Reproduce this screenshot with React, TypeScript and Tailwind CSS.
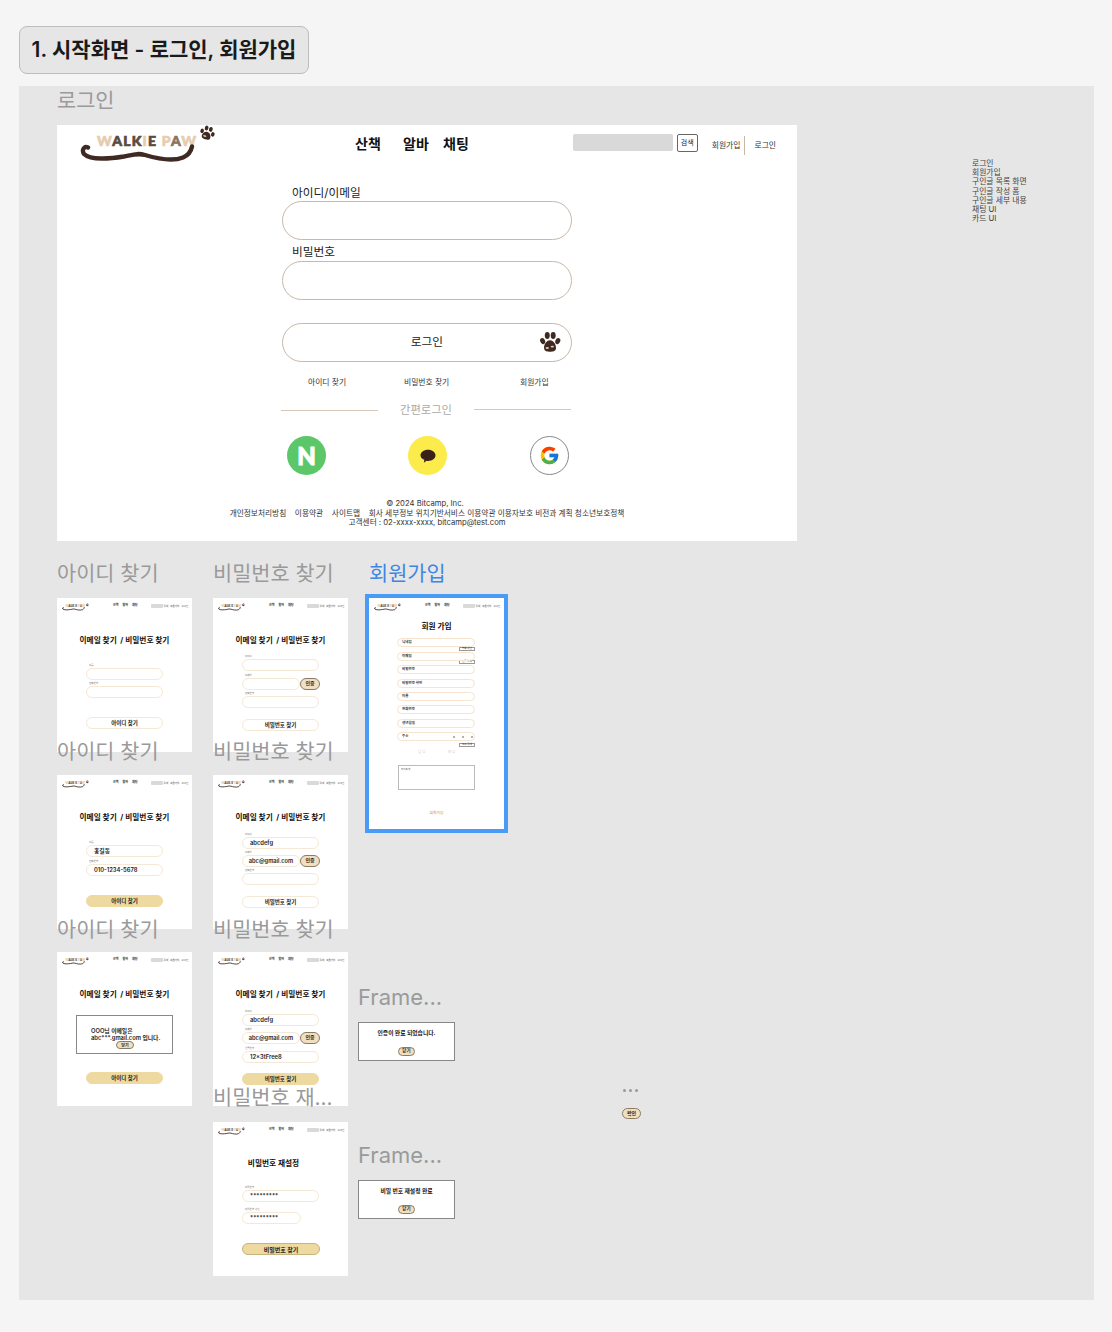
import { FcGoogle } from 'react-icons/fc';

function Paw({ className }: { className?: string }) {
  return (
    <svg viewBox="0 0 24 24" className={className} fill="#3e2a22">
      <ellipse cx="4" cy="11" rx="2.6" ry="3.4" transform="rotate(-25 4 11)" />
      <ellipse cx="9" cy="5" rx="2.7" ry="3.8" />
      <ellipse cx="15.5" cy="5" rx="2.7" ry="3.8" />
      <ellipse cx="20.5" cy="11" rx="2.6" ry="3.4" transform="rotate(25 20.5 11)" />
      <path d="M12 10c4 0 7 5 6.500 9-.4 3-3.500 3.500-6.500 3.500S6 22 5.600 19C5 15 8 10 12 10z" />
      <ellipse cx="9" cy="18.500" rx="1.800" ry="1" fill="#e6cdb0" />
      <ellipse cx="14.500" cy="17" rx="1.800" ry="1" fill="#e6cdb0" />
    </svg>
  );
}

function Logo({ className }: { className?: string }) {
  return (
    <svg viewBox="0 0 136 38" className={className}>
      <text
        x="17"
        y="21"
        fontFamily="Lato, sans-serif"
        fontWeight="900"
        fontSize="14"
        textLength="99"
        lengthAdjust="spacing"
        strokeWidth="0.7"
      >
        <tspan fill="#e6cdb0" stroke="#e6cdb0">W</tspan>
        <tspan fill="#5a4a40" stroke="#5a4a40">ALK</tspan>
        <tspan fill="#e6cdb0" stroke="#e6cdb0">I</tspan>
        <tspan fill="#5a4a40" stroke="#5a4a40">E </tspan>
        <tspan fill="#e6cdb0" stroke="#e6cdb0">P</tspan>
        <tspan fill="#8a7460" stroke="#8a7460">A</tspan>
        <tspan fill="#e6cdb0" stroke="#e6cdb0">W</tspan>
      </text>
      <path
        d="M8 22.500C4 20.500 1.500 25 4 29c6 6 25 5 40 2.500 10-2 14-3.500 21-1.500 10 3 27 7 38 2.500 6-2.500 8-6 9-11"
        fill="none"
        stroke="#3e2a22"
        strokeWidth="4.400"
        strokeLinecap="round"
      />
      <g transform="translate(119 0) rotate(18 8 8) scale(0.68)">
        <ellipse cx="4" cy="11" rx="2.600" ry="3.400" fill="#3e2a22" />
        <ellipse cx="9" cy="5" rx="2.700" ry="3.600" fill="#3e2a22" />
        <ellipse cx="15.500" cy="5" rx="2.700" ry="3.600" fill="#3e2a22" />
        <ellipse cx="20.500" cy="11" rx="2.600" ry="3.400" fill="#3e2a22" />
        <path d="M12 10c4 0 7 4 6.500 8-.4 3-3.500 3.500-6.500 3.500S6 21 5.600 18C5 14 8 10 12 10z" fill="#3e2a22" />
        <ellipse cx="10" cy="17" rx="2.500" ry="1.200" fill="#e6cdb0" />
      </g>
    </svg>
  );
}

function MiniHeader() {
  return (
    <div className="flex h-[16px] items-start">
      <Logo className="ml-[5px] mt-[5px] h-[8px] w-[27px]" />
      <div className="ml-[24px] mt-[5px] flex gap-[4px] text-[3px] font-bold leading-[4px] text-[#222]">
        <span>산책</span>
        <span>알바</span>
        <span>채팅</span>
      </div>
      <div className="ml-[13px] mt-[6px] h-[4px] w-[12px] rounded-[1px] bg-[#d9d9d9]" />
      <div className="ml-[1px] mt-[7px] flex gap-[2px] text-[2.500px] leading-[3px] text-[#444]">
        <span>검색</span>
        <span>회원가입</span>
        <span>로그인</span>
      </div>
    </div>
  );
}

function MiniField({ label, value, className }: { label: string; value?: string; className?: string }) {
  return (
    <div className={className}>
      <div className="h-[4px] pl-[3px] text-[2.500px] leading-[4px] text-[#777]">{label}</div>
      <div className="flex h-[12px] w-[77px] items-center rounded-[6px] border border-[#f6e8d6] pl-[7px] text-[5.800px] font-semibold text-[#222]">
        {value}
      </div>
    </div>
  );
}

function AuthField({ value, className }: { value?: string; className?: string }) {
  return (
    <div className={className}>
      <div className="h-[4px] pl-[3px] text-[2.500px] leading-[4px] text-[#777]">이메일</div>
      <div className="flex w-[78px] items-center">
        <div className="flex h-[12px] w-[58px] items-center justify-center rounded-[6px] border border-[#f6e8d6] text-[5.700px] font-semibold text-[#222]">
          {value}
        </div>
        <PillBtn className="h-[12px] w-[20px] text-[5px]">인증</PillBtn>
      </div>
    </div>
  );
}

function PillBtn({ children, className }: { children: string; className?: string }) {
  return (
    <div
      className={`flex items-center justify-center rounded-full border border-[#8c7b62] bg-[#f0dfc0] font-semibold text-[#222] ${className ?? ''}`}
    >
      {children}
    </div>
  );
}

function WideBtn({ children, filled, className }: { children: string; filled?: boolean; className?: string }) {
  return (
    <div
      className={`flex h-[12px] w-[77px] items-center justify-center rounded-[6px] border text-[5.500px] font-bold text-[#222] ${
        filled ? 'border-[#eed9a0] bg-[#eed9a0]' : 'border-[#f6e8d6] bg-white'
      } ${className ?? ''}`}
    >
      {children}
    </div>
  );
}

function Thumb({
  title = '이메일 찾기  / 비밀번호 찾기',
  titleClass = 'pt-px',
  className,
  children,
}: {
  title?: string;
  titleClass?: string;
  className?: string;
  children: React.ReactNode;
}) {
  return (
    <div className={`absolute flex h-[154px] w-[135px] flex-col bg-white ${className ?? ''}`}>
      <MiniHeader />
      <div className={`mt-[21px] h-[10px] whitespace-pre text-center text-[7.700px] font-bold leading-[10px] text-[#111] ${titleClass}`}>{title}</div>
      <div className="ml-[29px] flex flex-col">{children}</div>
    </div>
  );
}

function Modal({ text, className }: { text: string; className?: string }) {
  return (
    <div className={`absolute flex h-[39px] w-[97px] flex-col items-center border border-[#888] bg-white ${className ?? ''}`}>
      <div className="mt-[6px] text-[5.800px] font-bold leading-[7px] text-[#111]">{text}</div>
      <PillBtn className="mt-[11px] h-[9px] w-[17px] text-[4.500px]">닫기</PillBtn>
    </div>
  );
}

function Label({
  children,
  tone = 'text-[20.800px] text-[#9a9a9a]',
  className,
}: {
  children: string;
  tone?: string;
  className?: string;
}) {
  return <div className={`absolute pt-px leading-[28px] ${tone} ${className ?? ''}`}>{children}</div>;
}

function SignupRow({ label, className, children }: { label: string; className?: string; children?: React.ReactNode }) {
  return (
    <div className={`relative flex h-[9px] w-[78px] items-center rounded-[5px] border border-[#f6e4cf] pl-[4px] text-[3.500px] font-semibold text-[#333] ${className ?? ''}`}>
      {label}
      {children}
    </div>
  );
}

function SmallCheck({ children, className }: { children: string; className?: string }) {
  return (
    <div className={`ml-auto flex h-[4px] w-[16px] items-center justify-center border border-[#999] text-[2.500px] leading-none text-[#333] ${className ?? ''}`}>
      {children}
    </div>
  );
}

function MainFrame() {
  return (
    <div className="absolute left-[38px] top-[39px] flex h-[416px] w-[740px] flex-col bg-white">
      <div className="flex h-[60px] items-start">
        <Logo className="ml-[23px] h-[38px] w-[136px]" />
        <div className="ml-[139px] mt-[9px] flex text-[14px] font-bold leading-[19px] text-[#111]">
          <span className="w-[48px]">산책</span>
          <span className="w-[40px]">알바</span>
          <span>채팅</span>
        </div>
        <div className="ml-[104px] mt-[9px] h-[17px] w-[100px] rounded-[2px] bg-[#d9d9d9]" />
        <div className="ml-[4px] mt-[9px] flex h-[18px] w-[21px] items-center justify-center rounded-[2px] border border-[#666] text-[7px] text-[#222]">검색</div>
        <div className="ml-[14px] mt-[11px] flex h-[19px] items-center text-[7.800px] text-[#333]">
          <span>회원가입</span>
          <span className="mx-[4px] h-[19px] w-px bg-[#c8b8a8]" />
          <span className="ml-[5px]">로그인</span>
        </div>
      </div>
      <div className="ml-[225px] flex w-[290px] flex-col">
        <div className="pl-[10px] text-[11.700px] leading-[16px] text-[#222]">아이디/이메일</div>
        <div className="h-[39px] rounded-[20px] border border-[#c8b8a8]" />
        <div className="mt-[4px] pl-[10px] text-[11.700px] leading-[17px] text-[#222]">비밀번호</div>
        <div className="h-[39px] rounded-[20px] border border-[#c8b8a8]" />
        <div className="relative mt-[23px] flex h-[39px] items-center justify-center rounded-[20px] border border-[#c8b8a8] text-[11.700px] text-[#222]">
          로그인
          <Paw className="absolute right-[10px] top-[7px] h-[22px] w-[22px]" />
        </div>
        <div className="mt-[15px] flex text-[7.800px] leading-[11px] text-[#333]">
          <span className="ml-[26px] w-[96px]">아이디 찾기</span>
          <span className="w-[116px]">비밀번호 찾기</span>
          <span>회원가입</span>
        </div>
        <div className="mt-[15px] flex items-center text-[11.300px] leading-[15px] text-[#aaa]">
          <span className="ml-[-1px] h-px w-[97px] bg-[#d6c9bc]" />
          <span className="mx-auto">간편로그인</span>
          <span className="mb-[3px] mr-px h-px w-[97px] bg-[#d6c9bc]" />
        </div>
        <div className="mt-[18px] flex pl-[5px]">
          <div className="flex h-[39px] w-[39px] items-center justify-center rounded-full bg-[#5bc768] font-['Lato',sans-serif] text-[24px] font-black text-white [-webkit-text-stroke:1px_white]">N</div>
          <div className="ml-[82px] flex h-[39px] w-[39px] items-center justify-center rounded-full bg-[#fbec4b]">
            <svg viewBox="0 0 24 24" className="h-[18px] w-[18px]" fill="#3a211a">
              <path d="M12 3.500c5.800 0 10 3.300 10 7.500s-4.200 7.500-10 7.500c-.7 0-1.300 0-2-.2L6.500 21l.6-3.900C4 15.800 2 13.600 2 11c0-4.200 4.200-7.500 10-7.500z" />
            </svg>
          </div>
          <div className="ml-[83px] flex h-[39px] w-[39px] items-center justify-center rounded-full border border-[#888] bg-white">
            <FcGoogle className="h-[21px] w-[21px]" />
          </div>
        </div>
      </div>
      <div className="mt-[24px] flex flex-col items-center text-[7.700px] leading-[9.500px] text-[#333]">
        <div className="ml-[-4px]">© 2024 Bitcamp, Inc.</div>
        <div className="whitespace-pre">개인정보처리방침    이용약관    사이트맵    회사 세부정보 위치기반서비스 이용약관 이용자보호 비전과 계획 청소년보호정책</div>
        <div>고객센터 : 02-xxxx-xxxx, bitcamp@test.com</div>
      </div>
    </div>
  );
}

function SignupFrame() {
  return (
    <div className="absolute left-[346px] top-[508px] flex h-[239px] w-[143px] flex-col border-[4px] border-[#4a9bf5] bg-white">
      <MiniHeader />
      <div className="mt-[8px] text-center text-[7.700px] font-bold leading-[10px] text-[#111]">회원 가입</div>
      <div className="ml-[28px] mt-[6px] flex w-[78px] flex-col">
        <SignupRow label="닉네임" />
        <SmallCheck>중복 확인</SmallCheck>
        <SignupRow label="이메일" className="mt-px" />
        <SmallCheck className="mt-[-1px]">인증 발송</SmallCheck>
        <SignupRow label="비밀번호" className="mt-px" />
        <SignupRow label="비밀번호 확인" className="mt-[5px]" />
        <SignupRow label="이름" className="mt-[4px]" />
        <SignupRow label="전화번호" className="mt-[4px]" />
        <SignupRow label="생년월일" className="mt-[5px]" />
        <SignupRow label="주소" className="mt-[4px]">
          <span className="ml-auto mr-[1px] flex gap-[7px]">
            <span className="h-[2px] w-[2px] rounded-full bg-[#999]" />
            <span className="h-[2px] w-[2px] rounded-full bg-[#999]" />
            <span className="h-[2px] w-[2px] rounded-full bg-[#999]" />
          </span>
        </SignupRow>
        <SmallCheck className="mt-[2px]">주소 검색</SmallCheck>
        <div className="mt-[3px] flex text-[3.500px] leading-[5px] text-[#c9c9c9]">
          <span className="ml-[21px] w-[30px]">남 ○</span>
          <span>여 ○</span>
        </div>
        <div className="ml-px mt-[10px] h-[25px] w-[77px] border border-[#bbb] p-[2px] text-[2.500px] leading-[3px] text-[#444]">자기소개</div>
      </div>
      <div className="mt-[20px] text-center text-[3.800px] font-medium leading-[5px] text-[#d9a860]">회원가입</div>
    </div>
  );
}

const menuItems = ['로그인', '회원가입', '구인글 목록 화면', '구인글 작성 폼', '구인글 세부 내용', '채팅 UI', '카드 UI'];

export default function App() {
  return (
    <div className="min-h-[1332px] bg-[#f5f5f5] pl-[19px] pt-[26px] font-[Inter,'Noto_Sans_CJK_KR',sans-serif]">
      <div className="flex h-[48px] w-[290px] items-center justify-center rounded-[8px] border border-[#bdbdbd] bg-[#e6e6e6] text-[21px] font-semibold text-[#1a1a1a]">
        1. 시작화면 - 로그인, 회원가입
      </div>
      <div className="relative mt-[12px] h-[1214px] w-[1075px] bg-[#e6e6e6]">
        <Label className="left-[38px] top-0">로그인</Label>
        <MainFrame />
        <div className="absolute left-[953px] top-[73px] text-[7.800px] leading-[9.200px] text-[#444]">
          {menuItems.map((item) => (
            <div key={item}>{item}</div>
          ))}
        </div>

        <Label className="left-[38px] top-[473px]">아이디 찾기</Label>
        <Label className="left-[194px] top-[473px]">비밀번호 찾기</Label>
        <Label tone="text-[20.800px] text-[#3d86e5]" className="left-[350px] top-[473px]">회원가입</Label>

        <Thumb className="left-[38px] top-[512px]">
          <MiniField label="이름" className="mt-[19px]" />
          <MiniField label="전화번호" className="mt-[2px]" />
          <WideBtn className="mt-[19px]">아이디 찾기</WideBtn>
        </Thumb>
        <Thumb className="left-[194px] top-[512px]">
          <MiniField label="아이디" className="mt-[10px]" />
          <AuthField className="mt-[3px]" />
          <MiniField label="전화번호" className="mt-[2px]" />
          <WideBtn className="mt-[11px]">비밀번호 찾기</WideBtn>
        </Thumb>
        <SignupFrame />

        <Label className="left-[38px] top-[651px]">아이디 찾기</Label>
        <Label className="left-[194px] top-[651px]">비밀번호 찾기</Label>
        <Thumb className="left-[38px] top-[689px]">
          <MiniField label="이름" value="홍길동" className="mt-[19px]" />
          <MiniField label="전화번호" value="010-1234-5678" className="mt-[3px]" />
          <WideBtn filled className="mt-[19px]">아이디 찾기</WideBtn>
        </Thumb>
        <Thumb className="left-[194px] top-[689px]">
          <MiniField label="아이디" value="abcdefg" className="mt-[11px]" />
          <AuthField value="abc@gmail.com" className="mt-[2px]" />
          <MiniField label="전화번호" className="mt-[2px]" />
          <WideBtn className="mt-[11px]">비밀번호 찾기</WideBtn>
        </Thumb>

        <Label className="left-[38px] top-[829px]">아이디 찾기</Label>
        <Label className="left-[194px] top-[829px]">비밀번호 찾기</Label>
        <Thumb className="left-[38px] top-[866px]">
          <div className="ml-[-10px] mt-[16px] flex h-[39px] w-[97px] flex-col border border-[#888] pl-[14px] pt-[11px] text-[5.800px] font-semibold leading-[7px] text-[#222]">
            <div>OOO님 이메일은</div>
            <div className="whitespace-nowrap">abc***.gmail.com 입니다.</div>
            <PillBtn className="ml-[25px] h-[8px] w-[18px] text-[4px]">닫기</PillBtn>
          </div>
          <WideBtn filled className="mt-[18px]">아이디 찾기</WideBtn>
        </Thumb>
        <Thumb className="left-[194px] top-[866px]">
          <MiniField label="아이디" value="abcdefg" className="mt-[11px]" />
          <AuthField value="abc@gmail.com" className="mt-[2px]" />
          <MiniField label="인증번호" value="12×3tFree8" className="mt-[3px]" />
          <WideBtn filled className="mt-[10px]">비밀번호 찾기</WideBtn>
        </Thumb>

        <Label tone="text-[22px] text-[#9a9a9a]" className="left-[339px] top-[896px]">Frame...</Label>
        <Modal text="인증이 완료 되었습니다." className="left-[339px] top-[936px]" />

        <Label className="left-[194px] top-[997px]">비밀번호 재...</Label>
        <div className="absolute left-[604px] top-[1003px] flex gap-[3px]">
          <span className="h-[3px] w-[3px] rounded-full bg-[#999]" />
          <span className="h-[3px] w-[3px] rounded-full bg-[#999]" />
          <span className="h-[3px] w-[3px] rounded-full bg-[#999]" />
        </div>
        <PillBtn className="absolute left-[603px] top-[1022px] h-[11px] w-[19px] text-[5px]">확인</PillBtn>

        <Thumb title="비밀번호 재설정" titleClass="pr-[14px]" className="left-[194px] top-[1036px]">
          <MiniField label="비밀번호" value="*********" className="mt-[17px]" />
          <div className="mt-[6px]">
            <div className="h-[4px] pl-[3px] text-[2.500px] leading-[4px] text-[#777]">비밀번호 확인</div>
            <div className="flex h-[12px] w-[59px] items-center rounded-[6px] border border-[#f6e8d6] pl-[7px] text-[5.800px] font-semibold text-[#222]">*********</div>
          </div>
          <div className="mt-[19px] flex h-[12px] w-[78px] items-center justify-center rounded-[6px] border border-[#c9b37c] bg-[#eed9a0] text-[6px] font-bold text-[#222]">비밀번호 찾기</div>
        </Thumb>

        <Label tone="text-[22px] text-[#9a9a9a]" className="left-[339px] top-[1054px]">Frame...</Label>
        <Modal text="비밀 번호 재설정 완료" className="left-[339px] top-[1094px]" />
      </div>
    </div>
  );
}
